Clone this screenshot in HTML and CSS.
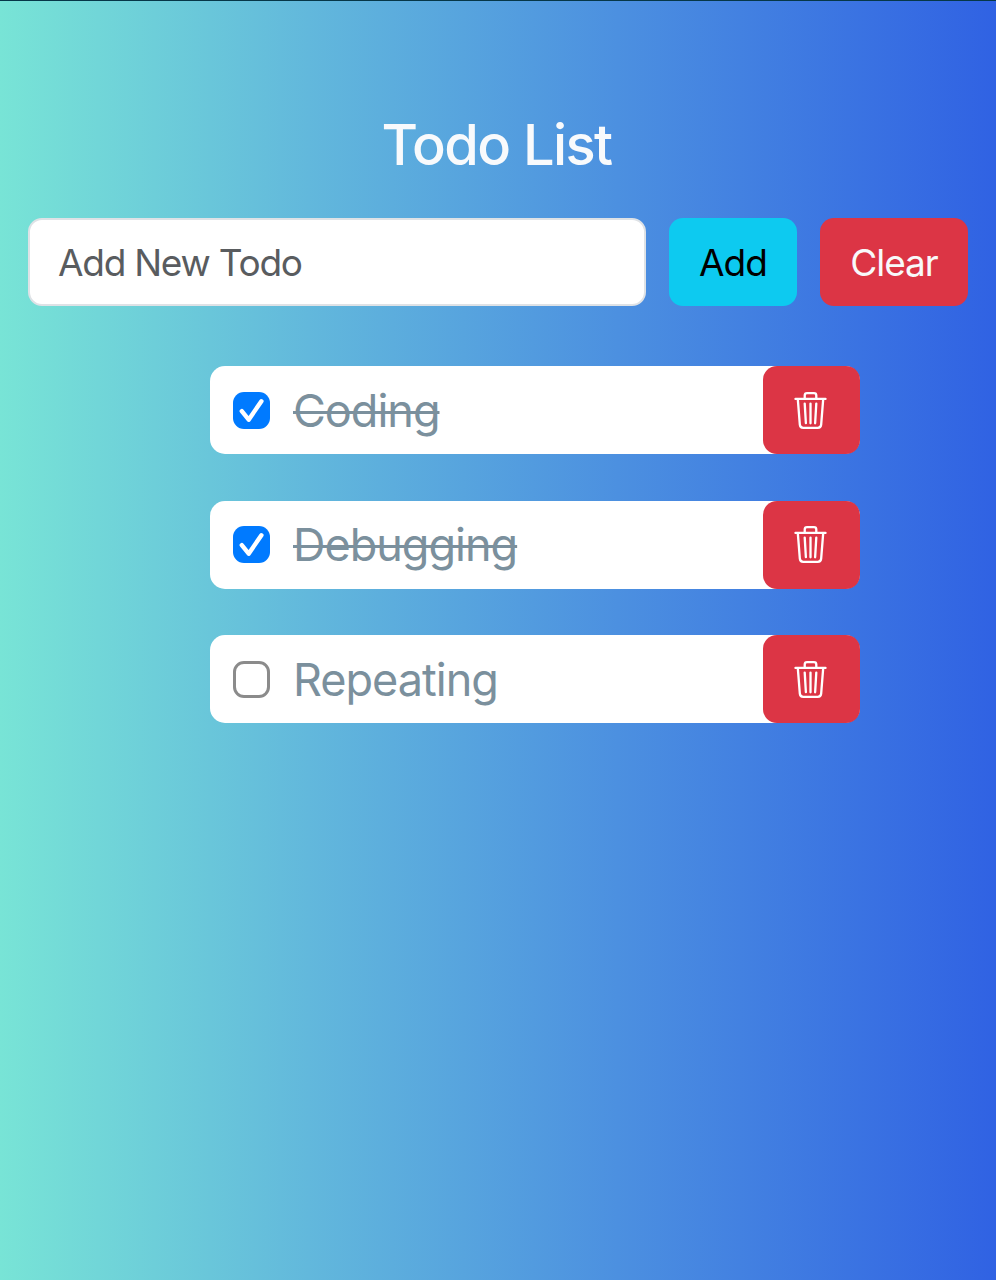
FILE: index.html
```html
<!DOCTYPE html>
<html lang="en">
<head>
<meta charset="utf-8">
<title>Todo List</title>
<link rel="stylesheet" href="styles.css">
</head>
<body>
<svg class="sprite" aria-hidden="true">
  <symbol id="trash" viewBox="0 0 16 16"><path d="M6.5 1h3a.5.5 0 0 1 .5.5v1H6v-1a.5.5 0 0 1 .5-.5M11 2.5v-1A1.5 1.5 0 0 0 9.5 0h-3A1.5 1.5 0 0 0 5 1.5v1H1.5a.5.5 0 0 0 0 1h.538l.853 10.66A2 2 0 0 0 4.885 16h6.23a2 2 0 0 0 1.994-1.84l.853-10.66h.538a.5.5 0 0 0 0-1zm1.958 1-.846 10.58a1 1 0 0 1-.997.92h-6.23a1 1 0 0 1-.997-.92L3.042 3.5zm-7.487 1a.5.5 0 0 1 .528.47l.5 8.5a.5.5 0 0 1-.998.06L5 5.03a.5.5 0 0 1 .47-.53Zm5.058 0a.5.5 0 0 1 .47.53l-.5 8.5a.5.5 0 1 1-.998-.06l.5-8.5a.5.5 0 0 1 .528-.47M8 4.5a.5.5 0 0 1 .5.5v8.5a.5.5 0 0 1-1 0V5a.5.5 0 0 1 .5-.5"/></symbol>
  <symbol id="check" viewBox="0 0 37 37"><path d="M8.8 19.2 15.7 27.7 28.4 9.2" fill="none" stroke="#fff" stroke-width="4.4" stroke-linecap="round" stroke-linejoin="round"/></symbol>
</svg>
<main class="app">
  <h1 class="title">Todo List</h1>
  <form class="form">
    <input class="field" type="text" placeholder="Add New Todo">
    <button class="btn btn-add" type="button">Add</button>
    <button class="btn btn-clear" type="button">Clear</button>
  </form>
  <ul class="list">
    <li class="item done"><span class="box checked"><svg><use href="#check"/></svg></span><span class="label">Coding</span><button class="delete" type="button" aria-label="Delete"><svg><use href="#trash"/></svg></button></li>
    <li class="item done"><span class="box checked"><svg><use href="#check"/></svg></span><span class="label">Debugging</span><button class="delete" type="button" aria-label="Delete"><svg><use href="#trash"/></svg></button></li>
    <li class="item"><span class="box"></span><span class="label">Repeating</span><button class="delete" type="button" aria-label="Delete"><svg><use href="#trash"/></svg></button></li>
  </ul>
</main>
</body>
</html>
```
FILE: styles.css
```css
* { box-sizing: border-box; }
body {
  margin: 0;
  min-height: 1280px;
  border-top: 1px solid #063748;
  background: linear-gradient(90deg, #78e4d6 0%, #62b8dc 31%, #4c90e0 62%, #3062e3 100%);
  font-family: Inter, "Liberation Sans", sans-serif;
}
.sprite { position: absolute; width: 0; height: 0; }
.app { padding: 109px 28px 0; }
.title {
  margin: 0;
  padding-right: 3px;
  color: #f8fafc;
  font-size: 56px;
  font-weight: 500;
  line-height: 70px;
  letter-spacing: -1.6px;
  text-align: center;
}
.form {
  display: flex;
  gap: 23px;
  height: 88px;
  margin: 38px 0 0;
}
.field, .btn { font: 400 37px/1 Inter, "Liberation Sans", sans-serif; border-radius: 14px; }
.field {
  flex: 1;
  min-width: 0;
  padding: 0 28px;
  border: 2px solid #dee2e6;
  background: #fff;
  letter-spacing: -1.25px;
}
.field::placeholder { color: #595c5f; opacity: 1; }
.btn { padding: 0; border: 0; letter-spacing: -1px; }
.btn-add { width: 128px; background: #0dcaf0; color: #000; }
.btn-clear { width: 148px; background: #dc3545; color: #f8f9fa; }
.list {
  display: flex;
  flex-direction: column;
  gap: 46.5px;
  width: 650px;
  margin: 60px 0 0 182px;
  padding: 0;
  list-style: none;
}
.item {
  display: flex;
  align-items: center;
  height: 88px;
  padding-left: 23px;
  border-radius: 15px;
  background: #fff;
}
.box {
  width: 37px;
  height: 37px;
  border: 3px solid #8b8b8b;
  border-radius: 11px;
}
.checked { border: 0; background: #007aff; }
.checked svg { display: block; width: 37px; height: 37px; }
.label {
  margin-left: 23px;
  padding-top: 1px;
  color: #7b909d;
  font-size: 45px;
  line-height: 56px;
  letter-spacing: -1px;
}
.done .label { text-decoration: line-through; text-decoration-thickness: 3px; }
.delete {
  display: grid;
  place-items: center;
  width: 97px;
  height: 88px;
  margin-left: auto;
  padding: 0 2px 0 0;
  border: 0;
  border-radius: 14px;
  background: #dc3545;
  color: #fff;
}
.delete svg { width: 37px; height: 37px; fill: currentColor; }
```
